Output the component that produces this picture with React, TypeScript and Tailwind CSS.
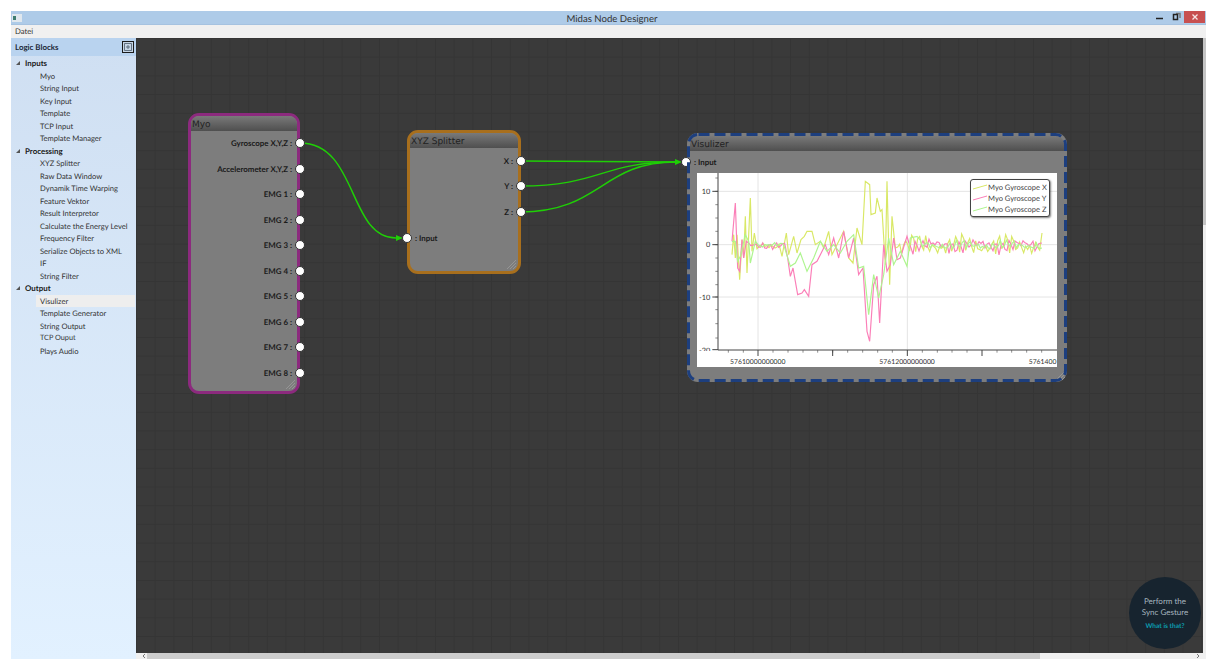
import type { ReactNode } from "react"

const uiFont = "[font-family:'Lato','Open_Sans',sans-serif] [text-rendering:geometricPrecision]"

const tree = [
  { title: "Inputs", items: ["Myo", "String Input", "Key Input", "Template", "TCP Input", "Template Manager"] },
  {
    title: "Processing",
    items: [
      "XYZ Splitter",
      "Raw Data Window",
      "Dynamik Time Warping",
      "Feature Vektor",
      "Result Interpretor",
      "Calculate the Energy Level",
      "Frequency Filter",
      "Serialize Objects to XML",
      "IF",
      "String Filter",
    ],
  },
  { title: "Output", items: ["Visulizer", "Template Generator", "String Output", "TCP Ouput", "Plays Audio"] },
]

type Point = [number, number]

// sensor noise for the quiet stretches of a series
function wiggle(from: number, to: number, amp: number, seed: number): Point[] {
  const pts: Point[] = []
  for (let x = from; x <= to; x += 6) {
    const n =
      Math.sin(x * 0.29 + seed) * 0.45 +
      Math.sin(x * 0.71 + seed * 2.3) * 0.3 +
      Math.sin(x * 0.047 + seed * 0.7) * 0.3 +
      Math.sin(x * 1.63 + seed * 1.4) * 0.2
    pts.push([x, 362 + n * amp])
  }
  return pts
}

const toPoints = (pts: Point[]) => pts.map(([x, y]) => `${x},${y}`).join(" ")

const seriesX: Point[] = [
  [155, 390], [160, 330], [165, 400], [170, 330], [178, 465], [185, 345], [190, 400], [195, 275], [200, 445], [210, 220],
  [215, 380], [222, 325], [230, 372], ...wiggle(236, 300, 14, 1.2), [305, 395], [318, 325], [325, 390], [340, 335], [350, 385],
  [362, 345], [372, 335], [380, 320], [395, 320], [405, 360], [420, 350], [430, 370], [445, 320], [455, 390], [470, 360],
  [490, 320], [505, 400], [518, 415], [530, 310], [545, 360], [555, 170], [568, 180], [572, 270], [585, 265], [590, 220],
  [600, 260], [605, 255], [615, 420], [620, 170], [628, 480], [635, 275], [645, 370], ...wiggle(652, 1080, 36, 4.1), [1085, 325],
]

const seriesY: Point[] = [
  [155, 350], [165, 235], [172, 430], [178, 440], [185, 345], [190, 400], [198, 350], ...wiggle(205, 315, 12, 2.6), [322, 400],
  [330, 455], [338, 430], [345, 470], [352, 510], [365, 505], [372, 495], [385, 515], [395, 420], [410, 410], [420, 390],
  [435, 360], [445, 390], [460, 340], [475, 400], [490, 320], [505, 400], [520, 340], [535, 450], [548, 430], [560, 620],
  [568, 650], [580, 480], [590, 455], [598, 595], [610, 360], [620, 440], [630, 420], [640, 340], [650, 405], [660, 400],
  [680, 335], ...wiggle(686, 1080, 24, 0.8), [1085, 355],
]

const seriesZ: Point[] = [
  [155, 350], [165, 350], [172, 410], [180, 395], [195, 330], [205, 350], [210, 415], [225, 350], ...wiggle(235, 318, 10, 5.3),
  [330, 425], [345, 415], [360, 385], [380, 440], [400, 400], [420, 350], [440, 380], [460, 360], [480, 385], [500, 350],
  [520, 330], [535, 430], [550, 425], [565, 570], [580, 450], [595, 520], [610, 450], [625, 340], [640, 420], [660, 380],
  [680, 425], [690, 340], [710, 335], ...wiggle(720, 1080, 16, 3.4), [1085, 370],
]

const lineColors = { x: "#d9e866", y: "#fb7fb8", z: "#aef58f" }

function Chart() {
  const minorX = [144, 189, 278, 323, 368, 412, 457, 502, 547, 592, 636, 726, 771, 815, 860, 950, 994, 1039, 1084]
  const minorY = [360, 200, 517, 280, 440, 597, 240, 320, 400, 480, 555, 640, 160]
  return (
    <div className="relative h-[194px] w-[360px] bg-white">
      <svg viewBox="50 145 1080 582" className="block h-full w-full">
        {[233, 681].map((x) => (
          <line key={x} x1={x} y1={145} x2={x} y2={675} stroke="#e4e4e4" strokeWidth={3} />
        ))}
        {[200, 360, 517].map((y) => (
          <line key={y} x1={113} y1={y} x2={1130} y2={y} stroke="#e4e4e4" strokeWidth={3} />
        ))}
        <polyline points={toPoints(seriesX)} fill="none" stroke={lineColors.x} strokeWidth={3.5} />
        <polyline points={toPoints(seriesY)} fill="none" stroke={lineColors.y} strokeWidth={3.5} />
        <polyline points={toPoints(seriesZ)} fill="none" stroke={lineColors.z} strokeWidth={3.5} />
        <path d="M113 145V676H1130" fill="none" stroke="#444" strokeWidth={3} />
        {minorY.map((y) => (
          <line key={y} x1={105} y1={y} x2={113} y2={y} stroke="#555" strokeWidth={2} />
        ))}
        {[200, 360, 517, 675].map((y) => (
          <line key={y} x1={96} y1={y} x2={113} y2={y} stroke="#444" strokeWidth={3} />
        ))}
        {minorX.map((x) => (
          <line key={x} x1={x} y1={676} x2={x} y2={684} stroke="#555" strokeWidth={2} />
        ))}
        {[233, 681, 905, 457].map((x) => (
          <line key={x} x1={x} y1={676} x2={x} y2={694} stroke="#444" strokeWidth={3} />
        ))}
        <g fill="#333" fontSize={22} fontFamily="'Lato', sans-serif">
          <text x={90} y={208} textAnchor="end">10</text>
          <text x={90} y={368} textAnchor="end">0</text>
          <text x={90} y={525} textAnchor="end">-10</text>
          <text x={90} y={684} textAnchor="end">-20</text>
        </g>
        {/* the lowest value label is cut by the plot bottom */}
        <rect x={50} y={679} width={44} height={20} fill="#fff" />
        <g fill="#333" fontSize={20.5} fontFamily="'Lato', sans-serif">
          <text x={149} y={718}>57610000000000</text>
          <text x={597} y={718}>57612000000000</text>
          <text x={1045} y={718}>5761400</text>
        </g>
      </svg>
      <div className="absolute left-[273px] top-[6px] flex h-[38px] w-[80px] flex-col justify-center rounded-[3px] border border-[#444] bg-white pl-[17px] text-[7.5px] leading-[11px] text-[#444] shadow-[1px_1px_2px_rgba(0,0,0,0.5)]">
        {[
          ["Myo Gyroscope X", lineColors.x],
          ["Myo Gyroscope Y", lineColors.y],
          ["Myo Gyroscope Z", lineColors.z],
        ].map(([label, color]) => (
          <div key={label} className="relative whitespace-nowrap">
            <svg viewBox="0 0 14 6" className="absolute left-[-15px] top-[2px] h-[6px] w-[14px]">
              <line x1={0} y1={5} x2={14} y2={1} stroke={color} strokeWidth={1} />
            </svg>
            {label}
          </div>
        ))}
      </div>
    </div>
  )
}

function Pin({ className }: { className: string }) {
  return <span className={`absolute size-[10px] rounded-full border border-[#333] bg-white ${className}`} />
}

function Grip() {
  return (
    <svg viewBox="0 0 12 12" className="absolute bottom-[1px] right-[1px] size-[12px]">
      <path d="M11 2L2 11M11 5L5 11M11 8L8 11" stroke="#959595" strokeWidth={1} />
    </svg>
  )
}

function NodeHeader({ title }: { title: string }) {
  return (
    <div className="flex h-[15px] items-end rounded-t-[8px] bg-gradient-to-b from-[#7a7a7a] to-[#4f4f4f] pl-[1px] text-[9px] leading-[12px] text-[#222] [font-family:'DejaVu_Sans',sans-serif]">
      {title}
    </div>
  )
}

function OutputPort({ label, top }: { label: string; top: number }) {
  return (
    <div className="absolute right-0 h-[10px]" style={{ top }}>
      <span className="absolute right-[5px] top-0 whitespace-nowrap text-[7.9px] font-bold leading-[10px] text-[#1a1a1a]">{label}</span>
      <Pin className="right-[-8px] top-0" />
    </div>
  )
}

function InputPort({ top, className }: { top: number; className: string }) {
  return (
    <div className={`absolute h-[10px] ${className}`} style={{ top }}>
      <Pin className="left-[-6px] top-0" />
      <span className="absolute left-[7px] top-0 whitespace-nowrap text-[7.9px] font-bold leading-[10px] text-[#1a1a1a]">: Input</span>
    </div>
  )
}

function Node({ className, title, children }: { className: string; title: string; children: ReactNode }) {
  return (
    <div className={`absolute rounded-[11px] border-[3px] bg-[#7d7d7d] ${uiFont} ${className}`}>
      <NodeHeader title={title} />
      {children}
      <Grip />
    </div>
  )
}

function Sidebar() {
  return (
    <aside className={`flex w-[125px] shrink-0 flex-col bg-gradient-to-b from-[#cfdff2] to-[#e2f1ff] ${uiFont}`}>
      <div className="flex h-[18px] items-center justify-between bg-[#b9d3ef] pl-[4px] pr-[2px] text-[7.9px] font-bold text-[#1c2a3a]">
        <span className="pt-[1px]">Logic Blocks</span>
        <span className="flex size-[12px] items-center justify-center border border-[#1b1b1b] bg-[#c7d6e6]">
          <svg viewBox="0 0 8 8" className="size-[8px]">
            <path d="M0.5 0.5H7.5V7.5H0.5ZM4 2V6M2 4H6" fill="none" stroke="#4a5a6a" strokeWidth={0.8} />
          </svg>
        </span>
      </div>
      <div className="pt-[1px] text-[7.6px] leading-[12.5px] text-[#333]">
        {tree.map((group) => (
          <div key={group.title}>
            <div className="flex h-[12.5px] items-center text-[7.9px] font-bold text-[#1a1a1a]">
              <svg viewBox="0 0 6 6" className="ml-[5px] mr-[5px] size-[4px]">
                <path d="M6 0V6H0Z" fill="#555" />
              </svg>
              {group.title}
            </div>
            {group.items.map((item) => (
              <div
                key={item}
                className={`ml-[25px] mr-px h-[12.5px] whitespace-nowrap pl-[4px] ${item === "Visulizer" ? "bg-[#eeeeee]" : ""} ${item === "TCP Ouput" ? "text-[7.3px]" : ""}`}
              >
                {item}
              </div>
            ))}
          </div>
        ))}
      </div>
    </aside>
  )
}

function Canvas() {
  const myoPorts = ["Gyroscope X,Y,Z :", "Accelerometer X,Y,Z :", "EMG 1 :", "EMG 2 :", "EMG 3 :", "EMG 4 :", "EMG 5 :", "EMG 6 :", "EMG 7 :", "EMG 8 :"]
  return (
    <main className="relative flex-1 overflow-hidden bg-[#3a3a3a] bg-[linear-gradient(#353535_1px,transparent_1px),linear-gradient(90deg,#353535_1px,transparent_1px)] bg-[size:18.7px_18.7px]">
      {/* wires run under the nodes so the pins cover their ends */}
      <svg className="absolute inset-0 h-full w-full" fill="none" stroke="#1fcf06" strokeWidth={1.5}>
        <path d="M164 105C222 105 212 200 260 200" />
        <path d="M384 123L540 124" />
        <path d="M384 148C465 148 465 124 540 124" />
        <path d="M384 174C465 174 465 124 540 124" />
        <path d="M267 200L260 197V203Z" fill="#1fcf06" stroke="none" />
        <path d="M546 124L539 121V127Z" fill="#1fcf06" stroke="none" />
      </svg>

      <Node title="Myo" className="left-[52px] top-[75px] h-[281px] w-[112px] border-[#8c2a7e]">
        {myoPorts.map((label, i) => (
          <OutputPort key={label} label={label} top={Math.round(22 + i * 25.55)} />
        ))}
      </Node>

      <Node title="XYZ Splitter" className="left-[271px] top-[92px] h-[144px] w-[114px] border-[#a86f1d]">
        <OutputPort label="X :" top={23} />
        <OutputPort label="Y :" top={48} />
        <OutputPort label="Z :" top={74} />
        <InputPort top={100} className="left-[-2px]" />
      </Node>

      {/* dashed outline sits on top of the grey body so the gaps show grey */}
      <div className={`absolute left-[551px] top-[95px] h-[249px] w-[380px] rounded-[11px] bg-[#7d7d7d] p-[3px] ${uiFont}`}>
        <NodeHeader title="Visulizer" />
        <InputPort top={24} className="left-0" />
        <div className="ml-[7px] mt-[22px]">
          <Chart />
        </div>
        <Grip />
        <svg className="pointer-events-none absolute inset-0 h-full w-full" fill="none">
          <rect x={1.5} y={1.5} width={377} height={246} rx={10} stroke="#1d3f7f" strokeWidth={3} strokeDasharray="11 5" />
        </svg>
      </div>

      <div className={`absolute left-[993px] top-[539px] z-20 flex size-[72px] flex-col items-center justify-center rounded-full bg-[#17242f] pt-[1px] text-center ${uiFont}`}>
        <div className="text-[8px] leading-[11px] text-[#a6b4bf]">
          Perform the
          <br />
          Sync Gesture
        </div>
        <div className="mt-[3px] text-[6.6px] font-bold leading-[10px] text-[#0c9db0]">What is that?</div>
      </div>
    </main>
  )
}

export default function App() {
  return (
    <div className={`flex h-[659px] w-[1206px] flex-col overflow-hidden bg-white ${uiFont}`}>
      <div className="h-[11px] shrink-0" />
      <div className="ml-[11px] flex min-h-0 flex-1 flex-col">
        <header className="relative flex h-[14px] shrink-0 items-center justify-center border-b border-[#a5c2e0] bg-[#aecbe8] text-[9.6px] text-[#333]">
          <svg viewBox="0 0 10 8" className="absolute left-[1px] top-[3px] h-[8px] w-[10px]">
            <rect width={10} height={8} fill="#dfe7ee" />
            <rect x={1} y={2} width={3} height={4} fill="#3f7d70" />
          </svg>
          <span className="ml-[7px] pt-[3px] leading-[13px]">Midas Node Designer</span>
          <div className="absolute right-[1px] top-0 flex h-[12px] items-center">
            <svg viewBox="0 0 40 12" className="h-[12px] w-[40px]">
              <path d="M12 7.5H19" stroke="#222" strokeWidth={1.5} />
              <path d="M32 2.5H36V7" fill="none" stroke="#777" strokeWidth={1.5} />
              <rect x={29.5} y={3.5} width={4} height={5} fill="none" stroke="#222" strokeWidth={1.5} />
            </svg>
            <div className="flex h-[12px] w-[21px] items-center justify-center bg-[#c75050]">
              <svg viewBox="0 0 6 6" className="size-[6px]">
                <path d="M0.5 0.5L5.5 5.5M5.5 0.5L0.5 5.5" stroke="#f5e6e6" strokeWidth={1.3} />
              </svg>
            </div>
          </div>
        </header>
        <div className="flex h-[13px] shrink-0 items-center bg-[#f0f0f0] pl-[4px] text-[7.7px] text-[#333]">Datei</div>
        <div className="flex min-h-0 flex-1">
          <Sidebar />
          <div className="flex min-w-0 flex-1 flex-col">
            <div className="flex min-h-0 flex-1">
              <Canvas />
              {/* vertical scrollbar, cut off by the window edge */}
              <div className="flex w-[3px] shrink-0 flex-col bg-[#eeeeee]">
                <div className="h-[187px] bg-[#c4c4c4]" />
              </div>
            </div>
            {/* horizontal scrollbar */}
            <div className="flex h-[6px] shrink-0 items-center bg-[#f0f0f0] text-[#777]">
              <svg viewBox="0 0 4 6" className="ml-[6px] h-[6px] w-[4px]">
                <path d="M3 1L1 3L3 5" fill="none" stroke="currentColor" strokeWidth={1} />
              </svg>
              <div className="ml-px h-full w-[893px] bg-[#cdcdcd]" />
              <svg viewBox="0 0 4 6" className="ml-auto mr-[6px] h-[6px] w-[4px]">
                <path d="M1 1L3 3L1 5" fill="none" stroke="currentColor" strokeWidth={1} />
              </svg>
            </div>
          </div>
        </div>
      </div>
    </div>
  )
}
